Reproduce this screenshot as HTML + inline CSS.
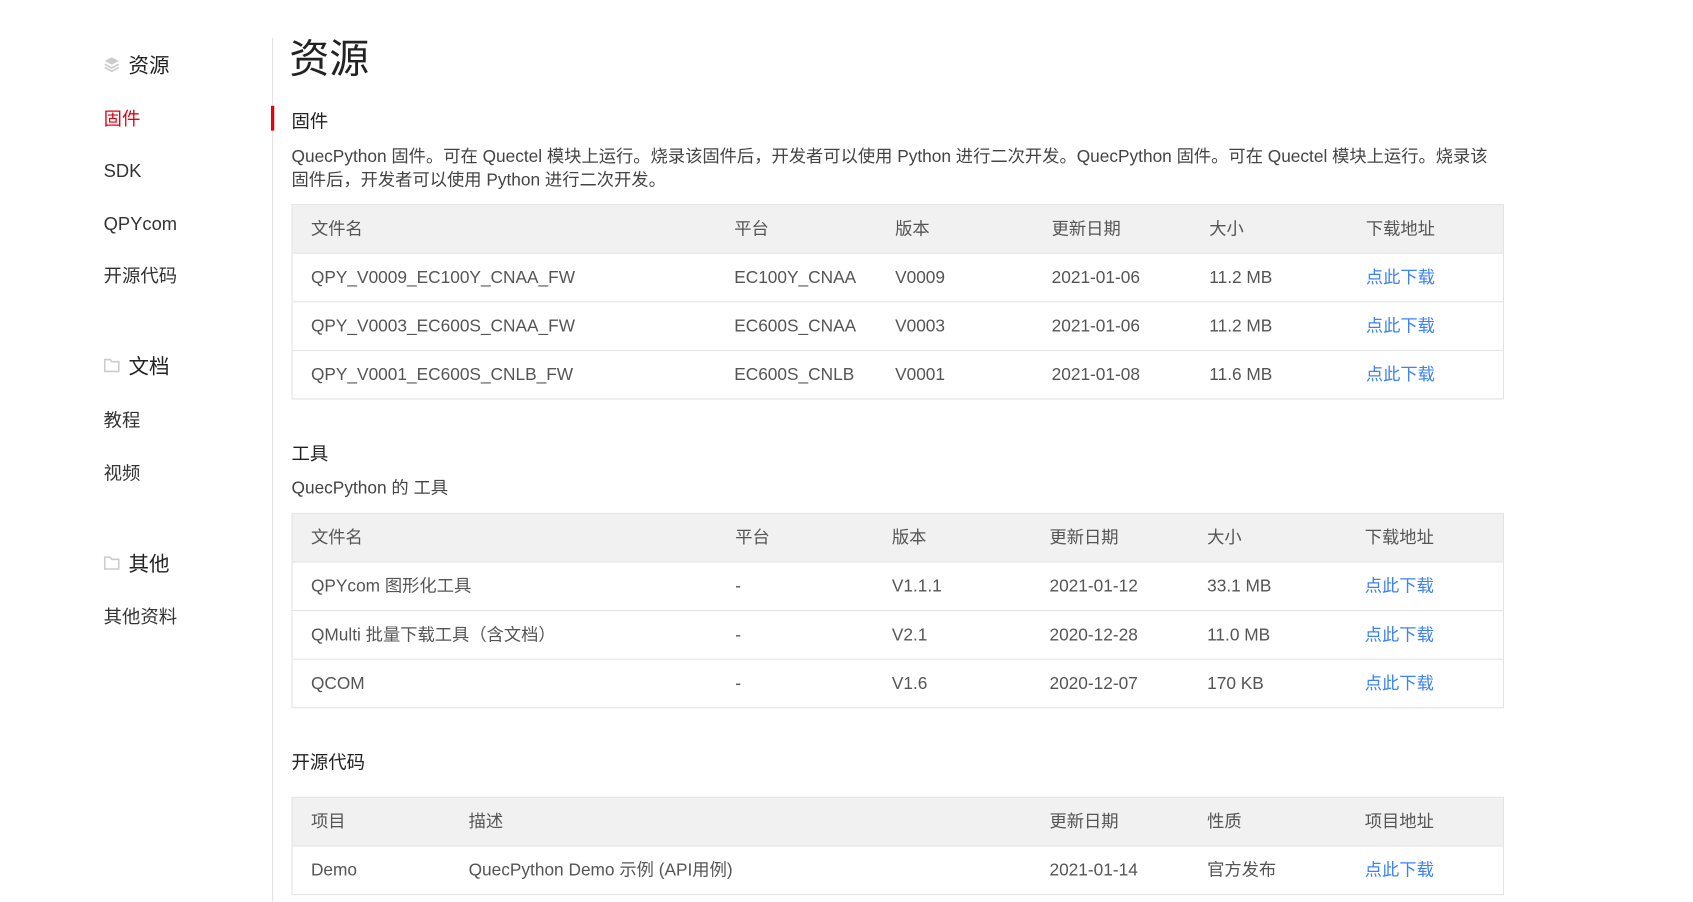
<!DOCTYPE html>
<html><head><meta charset="utf-8"><style>
*{margin:0;padding:0;box-sizing:border-box}
body{width:1693px;height:882px;overflow:hidden;background:#fff;font-family:"Liberation Sans","Noto Sans CJK SC",sans-serif;color:#333;position:relative}
#w{position:absolute;left:0;top:0;width:1568px;height:817px;transform:scale(1.0797);transform-origin:0 0}
.a{position:absolute;white-space:nowrap;line-height:22px}
.nav{font-size:17px;color:#333}
.grp{font-size:19px;color:#222}
.ico{display:inline-block;vertical-align:middle;margin-right:8px;position:relative;top:-2px}
.tbl{position:absolute;left:270px;width:1123px;border:1px solid #e3e3e3;border-bottom:none}
.row{position:relative;height:45px;border-bottom:1px solid #e3e3e3;font-size:16px;color:#555}
.row.h{background:#f1f1f1}
.row span{position:absolute;top:13px;line-height:20px;white-space:nowrap}
.lk{color:#3b82f6}
</style></head><body><div id="w">
<div class="a" style="left:252px;top:35px;width:1px;height:800px;background:#e2e2e2"></div>
<div class="a" style="left:251px;top:98px;width:3px;height:23px;background:#e60012"></div>

<div class="a grp" style="left:96px;top:51px"><svg class="ico" width="15" height="15" viewBox="0 0 15 15"><path d="M7.5 1L14 4.5 7.5 8 1 4.5z" fill="#ccc"/><path d="M1 7.5l6.5 3.5 6.5-3.5M1 10.5l6.5 3.5 6.5-3.5" fill="none" stroke="#ccc" stroke-width="1.5"/></svg>资源</div>
<div class="a nav" style="left:96px;top:100px;color:#e60012">固件</div>
<div class="a nav" style="left:96px;top:148px">SDK</div>
<div class="a nav" style="left:96px;top:197px">QPYcom</div>
<div class="a nav" style="left:96px;top:245px">开源代码</div>
<div class="a grp" style="left:96px;top:330px"><svg class="ico" width="15" height="13" viewBox="0 0 15 13"><path d="M1 1h5l1.5 2H14v9H1z" fill="none" stroke="#ccc" stroke-width="1.5"/></svg>文档</div>
<div class="a nav" style="left:96px;top:379px">教程</div>
<div class="a nav" style="left:96px;top:428px">视频</div>
<div class="a grp" style="left:96px;top:513px"><svg class="ico" width="15" height="13" viewBox="0 0 15 13"><path d="M1 1h5l1.5 2H14v9H1z" fill="none" stroke="#ccc" stroke-width="1.5"/></svg>其他</div>
<div class="a nav" style="left:96px;top:561px">其他资料</div>

<div class="a" style="left:268px;top:33px;font-size:37px;line-height:44px;color:#222">资源</div>
<div class="a" style="left:270px;top:102px;font-size:17px;color:#222">固件</div>
<div class="a" style="left:270px;top:135px;width:1112px;font-size:16px;line-height:22px;white-space:normal;color:#444">QuecPython 固件。可在 Quectel 模块上运行。烧录该固件后，开发者可以使用 Python 进行二次开发。QuecPython 固件。可在 Quectel 模块上运行。烧录该固件后，开发者可以使用 Python 进行二次开发。</div>

<div class="tbl" style="top:189px">
<div class="row h"><span style="left:17px">文件名</span><span style="left:409px">平台</span><span style="left:558px">版本</span><span style="left:703px">更新日期</span><span style="left:849px">大小</span><span style="left:994px">下载地址</span></div>
<div class="row"><span style="left:17px">QPY_V0009_EC100Y_CNAA_FW</span><span style="left:409px">EC100Y_CNAA</span><span style="left:558px">V0009</span><span style="left:703px">2021-01-06</span><span style="left:849px">11.2 MB</span><span class="lk" style="left:994px">点此下载</span></div>
<div class="row"><span style="left:17px">QPY_V0003_EC600S_CNAA_FW</span><span style="left:409px">EC600S_CNAA</span><span style="left:558px">V0003</span><span style="left:703px">2021-01-06</span><span style="left:849px">11.2 MB</span><span class="lk" style="left:994px">点此下载</span></div>
<div class="row"><span style="left:17px">QPY_V0001_EC600S_CNLB_FW</span><span style="left:409px">EC600S_CNLB</span><span style="left:558px">V0001</span><span style="left:703px">2021-01-08</span><span style="left:849px">11.6 MB</span><span class="lk" style="left:994px">点此下载</span></div>
</div>

<div class="a" style="left:270px;top:410px;font-size:17px;color:#222">工具</div>
<div class="a" style="left:270px;top:442px;font-size:16px;color:#444">QuecPython 的 工具</div>
<div class="tbl" style="top:475px">
<div class="row h"><span style="left:17px">文件名</span><span style="left:410px">平台</span><span style="left:555px">版本</span><span style="left:701px">更新日期</span><span style="left:847px">大小</span><span style="left:993px">下载地址</span></div>
<div class="row"><span style="left:17px">QPYcom 图形化工具</span><span style="left:410px">-</span><span style="left:555px">V1.1.1</span><span style="left:701px">2021-01-12</span><span style="left:847px">33.1 MB</span><span class="lk" style="left:993px">点此下载</span></div>
<div class="row"><span style="left:17px">QMulti 批量下载工具（含文档）</span><span style="left:410px">-</span><span style="left:555px">V2.1</span><span style="left:701px">2020-12-28</span><span style="left:847px">11.0 MB</span><span class="lk" style="left:993px">点此下载</span></div>
<div class="row"><span style="left:17px">QCOM</span><span style="left:410px">-</span><span style="left:555px">V1.6</span><span style="left:701px">2020-12-07</span><span style="left:847px">170 KB</span><span class="lk" style="left:993px">点此下载</span></div>
</div>

<div class="a" style="left:270px;top:696px;font-size:17px;color:#222">开源代码</div>
<div class="tbl" style="top:738px">
<div class="row h"><span style="left:17px">项目</span><span style="left:163px">描述</span><span style="left:701px">更新日期</span><span style="left:847px">性质</span><span style="left:993px">项目地址</span></div>
<div class="row"><span style="left:17px">Demo</span><span style="left:163px">QuecPython Demo 示例 (API用例)</span><span style="left:701px">2021-01-14</span><span style="left:847px">官方发布</span><span class="lk" style="left:993px">点此下载</span></div>
</div>
</div></body></html>
